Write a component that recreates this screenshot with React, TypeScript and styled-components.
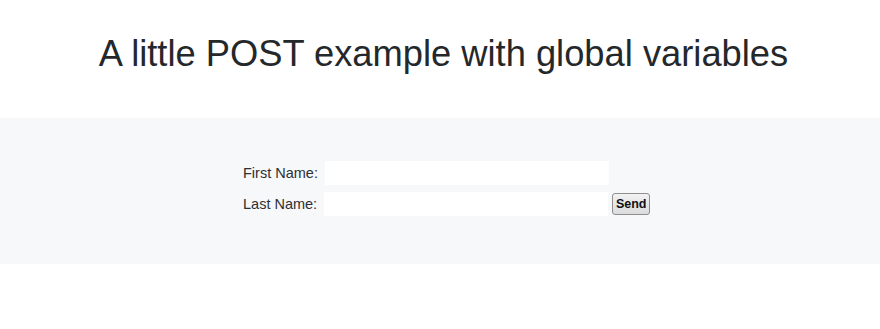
import React from "react";
import styled, { createGlobalStyle } from "styled-components";

const GlobalStyle = createGlobalStyle`
  html, body {
    margin: 0;
    padding: 0;
    background: #ffffff;
  }
  body {
    font-family: "Liberation Sans", Arial, Helvetica, sans-serif;
    color: #212529;
  }
`;

const Page = styled.div`
  display: flex;
  flex-direction: column;
  width: 880px;
  height: 329px;
  overflow: hidden;
`;

const Title = styled.h1`
  margin: 0;
  padding: 32px 0 0 7px;
  height: 118px;
  box-sizing: border-box;
  font-family: "Liberation Sans", Arial, sans-serif;
  font-size: 36.3px;
  font-weight: 400;
  line-height: 43px;
  text-align: center;
  color: #25282b;
`;

const Band = styled.section`
  background: #f7f8fa;
  height: 146px;
  box-sizing: border-box;
  padding: 43px 0 0 243px;
`;

const Form = styled.form`
  display: flex;
  flex-direction: column;
  gap: 7px;
  margin: 0;
`;

const Row = styled.div`
  display: flex;
  align-items: center;
  gap: 7px;
  height: 24px;
`;

const Label = styled.label`
  font-size: 14.5px;
  color: #2d3034;
  white-space: nowrap;
`;

const Field = styled.input`
  width: 284px;
  height: 24px;
  box-sizing: border-box;
  border: 1px solid #ffffff;
  background: #ffffff;
  padding: 2px 4px;
  font-family: "Liberation Sans", Arial, sans-serif;
  font-size: 14px;
  outline: none;
`;

const SendButton = styled.button<{ $offset?: number }>`
  margin-left: ${(p) => p.$offset ?? -3}px;
  width: 38px;
  height: 22px;
  box-sizing: border-box;
  padding: 0;
  border: 1px solid #8f8f8f;
  border-radius: 3px;
  background: linear-gradient(#f2f2f2, #dcdcdc);
  font-family: "Liberation Sans", Arial, sans-serif;
  font-size: 12.5px;
  font-weight: 700;
  color: #111111;
  cursor: pointer;
`;

export default function App() {
  return (
    <>
      <GlobalStyle />
      <Page>
        <Title>A little POST example with global variables</Title>
        <Band>
          <Form onSubmit={(e) => e.preventDefault()}>
            <Row>
              <Label htmlFor="first">First Name:</Label>
              <Field id="first" type="text" />
            </Row>
            <Row>
              <Label htmlFor="last">Last Name:</Label>
              <Field id="last" type="text" />
              <SendButton type="submit">Send</SendButton>
            </Row>
          </Form>
        </Band>
      </Page>
    </>
  );
}
